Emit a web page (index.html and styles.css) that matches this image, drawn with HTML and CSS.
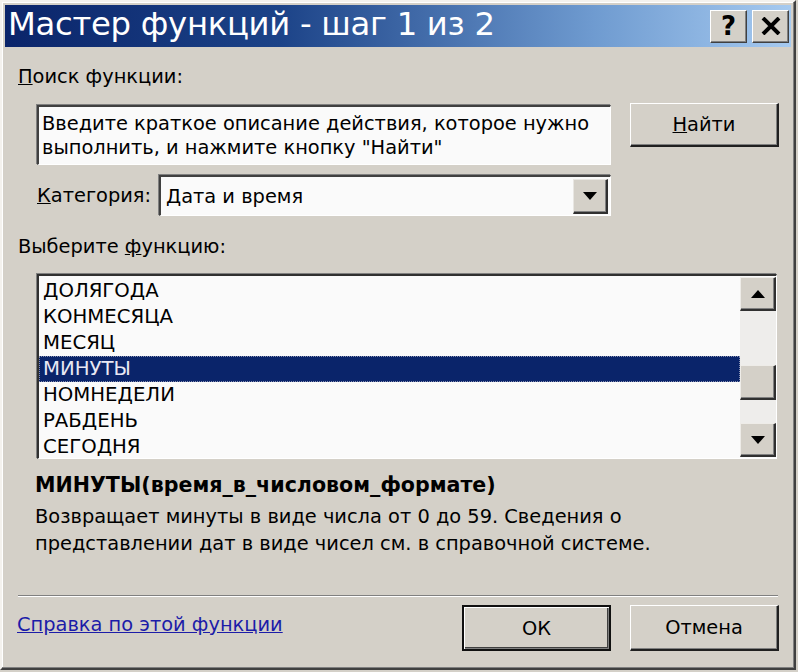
FILE: index.html
```html
<!DOCTYPE html>
<html lang="ru">
<head>
<meta charset="utf-8">
<link rel="stylesheet" href="styles.css">
</head>
<body>
<div class="window">
  <div class="titlebar">
    <span class="title">Мастер функций - шаг 1 из 2</span>
    <div class="title-btns">
      <div class="tbtn">?</div>
      <div class="tbtn close">
        <svg width="20" height="18" viewBox="0 0 20 18"><path d="M2 1 L18 17 M18 1 L2 17" stroke="#000" stroke-width="4"/></svg>
      </div>
    </div>
  </div>
  <div class="content">
    <div class="label lbl-search"><u>П</u>оиск функции:</div>
    <div class="search-row">
      <div class="textbox">Введите краткое описание действия, которое нужно<br>выполнить, и нажмите кнопку "Найти"</div>
      <div class="btn btn-find"><span><u>Н</u>айти</span></div>
    </div>
    <div class="cat-row">
      <span class="label"><u>К</u>атегория:</span>
      <div class="combo">
        <span class="combo-text">Дата и время</span>
        <div class="combo-btn"><svg width="14" height="8" viewBox="0 0 14 8"><path d="M0 0 H14 L7 8 Z" fill="#000"/></svg></div>
      </div>
    </div>
    <div class="label lbl-choose">Выберите <u>ф</u>ункцию:</div>
    <div class="listbox">
      <ul class="items">
        <li>ДОЛЯГОДА</li>
        <li>КОНМЕСЯЦА</li>
        <li>МЕСЯЦ</li>
        <li class="sel"><span>МИНУТЫ</span></li>
        <li>НОМНЕДЕЛИ</li>
        <li>РАБДЕНЬ</li>
        <li>СЕГОДНЯ</li>
      </ul>
      <div class="scrollbar">
        <div class="sbtn"><svg width="14" height="8" viewBox="0 0 14 8"><path d="M0 8 H14 L7 0 Z" fill="#000"/></svg></div>
        <div class="track t1"></div>
        <div class="thumb"></div>
        <div class="track t2"></div>
        <div class="sbtn"><svg width="14" height="8" viewBox="0 0 14 8"><path d="M0 0 H14 L7 8 Z" fill="#000"/></svg></div>
      </div>
    </div>
    <div class="signature">МИНУТЫ(время_в_числовом_формате)</div>
    <div class="desc">Возвращает минуты в виде числа от 0 до 59. Сведения о<br>представлении дат в виде чисел см. в справочной системе.</div>
    <div class="separator"></div>
    <div class="bottom-row">
      <a class="link" href="#">Справка по этой функции</a>
      <div class="btns">
        <div class="btn btn-default"><span>ОК</span></div>
        <div class="btn"><span>Отмена</span></div>
      </div>
    </div>
  </div>
</div>
</body>
</html>
```

FILE: styles.css
```css
* { box-sizing: border-box; }
html, body { margin: 0; padding: 0; background: #d4d0c8; }
body {
  font-family: "DejaVu Sans", "Liberation Sans", sans-serif;
  font-size: 19.4px;
  color: #000;
  width: 798px;
  height: 672px;
  overflow: hidden;
}
.window {
  width: 796px;
  height: 670px;
  background: #d4d0c8;
  border-top: 2px solid #f4f2ee;
  border-left: 2px solid #f4f2ee;
  border-right: 2px solid #404040;
  border-bottom: 2px solid #404040;
  box-shadow: inset -1px -1px 0 #808080, inset 1px 1px 0 #ffffff;
  padding: 3px 3px 0 3px;
  display: flex;
  flex-direction: column;
}
.titlebar {
  height: 42px;
  background: linear-gradient(to right, #0a246a 0%, #1c4388 35%, #6f9bd0 75%, #a6caf0 100%);
  display: flex;
  align-items: center;
  justify-content: space-between;
  padding: 0 0 0 3px;
}
.title {
  color: #fff;
  font-size: 32.3px;
  letter-spacing: -0.3px;
  line-height: 1;
  margin-top: -3px;
  font-family: "DejaVu Sans", sans-serif;
  white-space: nowrap;
}
.title-btns { display: flex; gap: 5px; margin-right: 2px; }
.tbtn {
  width: 37px;
  height: 33px;
  background: #d4d0c8;
  border-top: 1px solid #fff;
  border-left: 1px solid #fff;
  border-right: 1px solid #404040;
  border-bottom: 1px solid #404040;
  box-shadow: inset -1px -1px 0 #808080;
  display: flex;
  align-items: center;
  justify-content: center;
  font-weight: bold;
  font-size: 26px;
  line-height: 1;
}
.content {
  display: flex;
  flex-direction: column;
  padding-left: 13px;
}
.label { line-height: 24px; white-space: nowrap; }
.lbl-search { margin-top: 18px; height: 24px; }
.search-row {
  margin-top: 14px;
  display: flex;
  align-items: flex-start;
  height: 62px;
}
.textbox {
  flex: 0 0 574px;
  margin-left: 19px;
  margin-top: 2px;
  width: 574px;
  height: 60px;
  background: #fafafa;
  border-top: 2px solid #404040;
  border-left: 2px solid #404040;
  border-right: 1px solid #fff;
  border-bottom: 1px solid #fff;
  box-shadow: -1px -1px 0 #808080;
  padding: 5px 4px 0 3px;
  line-height: 24px;
  white-space: nowrap;
  overflow: hidden;
}
.btn {
  flex: 0 0 auto;
  width: 149px;
  height: 44px;
  background: #d4d0c8;
  border-top: 1px solid #fff;
  border-left: 1px solid #fff;
  border-right: 2px solid #202020;
  border-bottom: 2px solid #202020;
  box-shadow: inset -1px -1px 0 #808080;
  display: flex;
  align-items: center;
  justify-content: center;
}
.btn-find { margin-left: 19px; }
.cat-row {
  margin-top: 10px;
  height: 41px;
  display: flex;
  align-items: center;
}
.cat-row .label { margin-left: 19px; width: 122px; }
.combo {
  width: 452px;
  height: 41px;
  background: #fafafa;
  border-top: 2px solid #404040;
  border-left: 2px solid #404040;
  border-right: 1px solid #fff;
  border-bottom: 1px solid #fff;
  box-shadow: -1px -1px 0 #808080;
  display: flex;
  align-items: center;
  justify-content: space-between;
  padding: 0 2px 0 5px;
}
.combo-btn {
  width: 35px;
  height: 35px;
  background: #d4d0c8;
  border-top: 1px solid #e8e6e2;
  border-left: 1px solid #e8e6e2;
  border-right: 2px solid #303030;
  border-bottom: 2px solid #303030;
  box-shadow: inset -1px -1px 0 #808080;
  display: flex;
  align-items: center;
  justify-content: center;
}
.lbl-choose { margin-top: 19px; height: 24px; }
.listbox {
  margin-top: 15px;
  margin-left: 19px;
  width: 740px;
  height: 185px;
  background: #fafafa;
  border-top: 2px solid #303030;
  border-left: 2px solid #303030;
  border-right: 1px solid #fff;
  border-bottom: 1px solid #fff;
  box-shadow: -1px -1px 0 #808080;
  display: flex;
  overflow: hidden;
}
.items {
  list-style: none;
  margin: 0;
  padding: 2px 0 0 0;
  flex: 1;
  font-size: 19.7px;
}
.items li {
  height: 26px;
  line-height: 26px;
  padding-left: 4px;
  white-space: nowrap;
}
.items li.sel {
  background: #0a246a;
  color: #e8e8f4;
  outline: 1px dotted #8890b0;
  outline-offset: -1px;
}
.scrollbar {
  width: 36px;
  display: flex;
  flex-direction: column;
  padding-top: 1px;
}
.sbtn {
  height: 34px;
  background: #d4d0c8;
  border-top: 1px solid #eeece8;
  border-left: 1px solid #eeece8;
  border-right: 2px solid #303030;
  border-bottom: 2px solid #303030;
  box-shadow: inset -1px -1px 0 #808080;
  display: flex;
  align-items: center;
  justify-content: center;
}
.track { background: #eeedeb; }
.t1 { height: 54px; }
.t2 { height: 23px; }
.thumb {
  height: 35px;
  background: #d4d0c8;
  border-top: 1px solid #eeece8;
  border-left: 1px solid #eeece8;
  border-right: 2px solid #303030;
  border-bottom: 2px solid #303030;
  box-shadow: inset -1px -1px 0 #808080;
}
.signature {
  margin-top: 13px;
  margin-left: 17px;
  font-weight: bold;
  font-size: 20.6px;
  line-height: 26px;
  white-space: nowrap;
}
.desc {
  margin-top: 5px;
  margin-left: 17px;
  line-height: 27px;
  white-space: nowrap;
}
.separator {
  margin-top: 38px;
  width: 760px;
  height: 2px;
  border-top: 1px solid #808080;
  border-bottom: 1px solid #fff;
}
.bottom-row {
  margin-top: 8px;
  height: 46px;
  display: flex;
  align-items: center;
  justify-content: space-between;
  width: 761px;
}
.link {
  color: #1c1ca8;
  text-decoration: underline;
  margin-left: -1px;
  margin-top: -8px;
  white-space: nowrap;
}
.btns { display: flex; gap: 19px; }
.btns .btn { height: 46px; }
.btn-default {
  border: 2px solid #101010;
  box-shadow: inset 1px 1px 0 #fff, inset -1px -1px 0 #808080, inset -2px -2px 0 #404040;
}
```
